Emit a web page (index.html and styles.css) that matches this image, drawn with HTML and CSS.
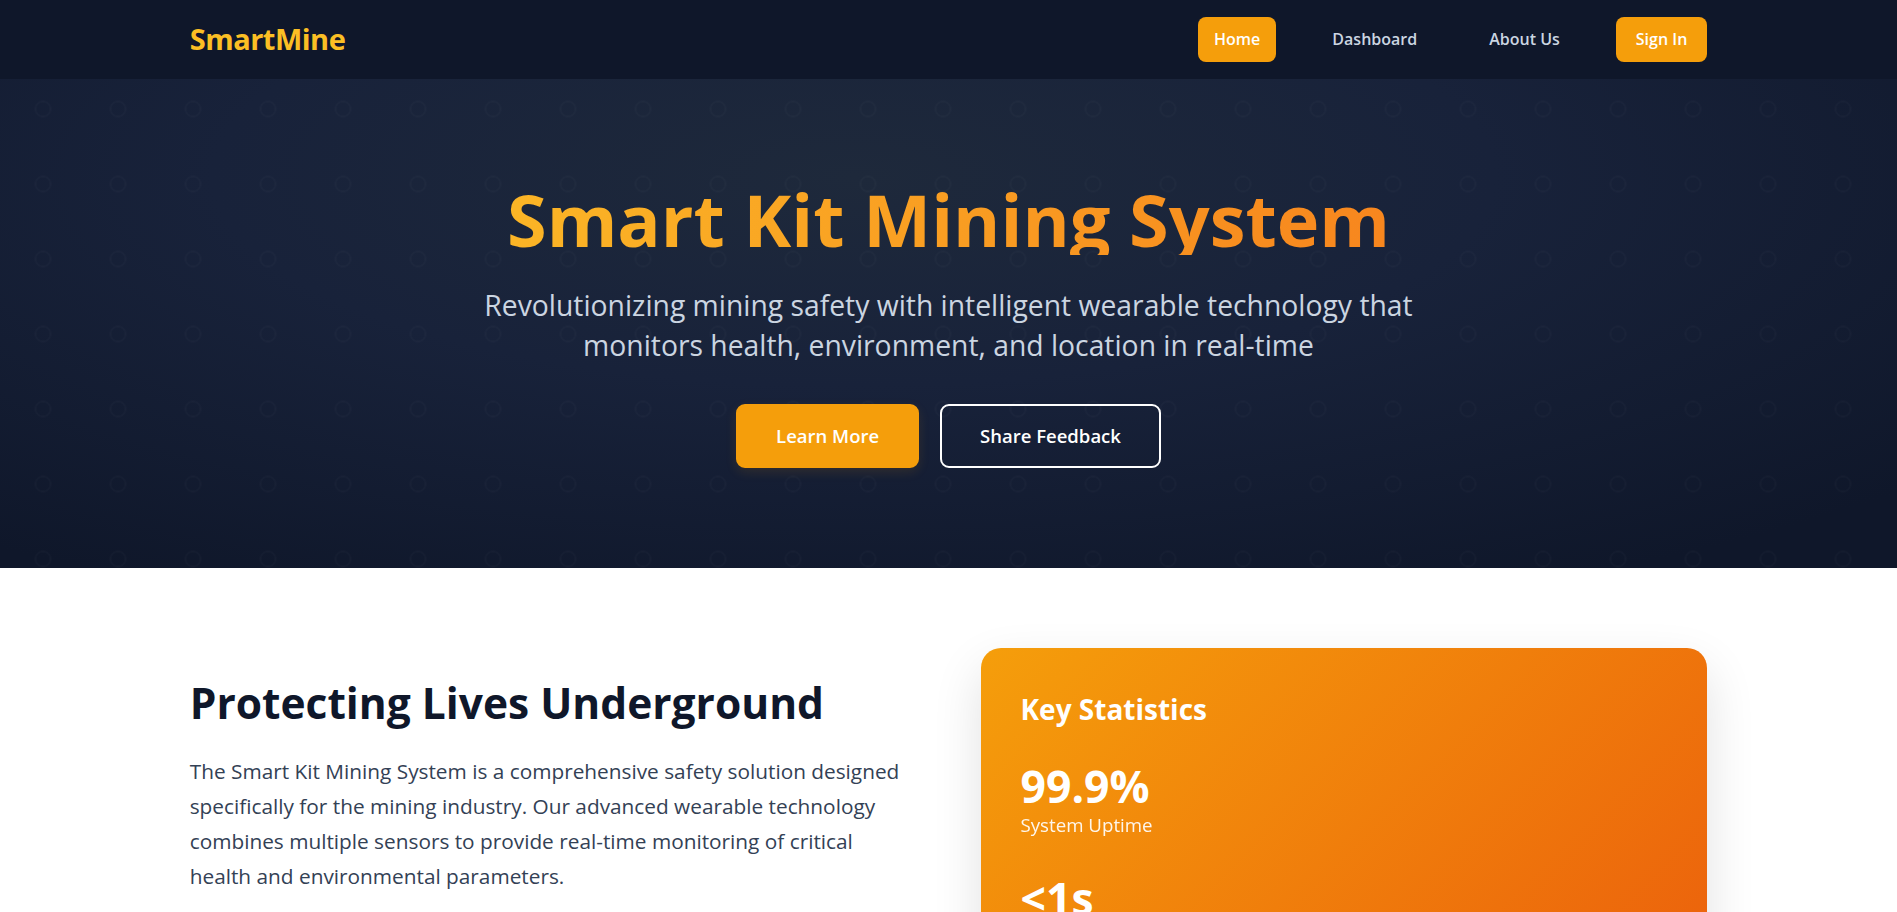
FILE: index.html
```html
<!DOCTYPE html>
<html lang="en">
<head>
<meta charset="UTF-8">
<title>SmartMine - Smart Kit Mining System</title>
<link rel="stylesheet" href="styles.css">
</head>
<body>
<nav class="navbar">
  <div class="container nav-inner">
    <a href="#" class="logo">SmartMine</a>
    <ul class="nav-links">
      <li><a href="#" class="nav-link active">Home</a></li>
      <li><a href="#" class="nav-link">Dashboard</a></li>
      <li><a href="#" class="nav-link">About Us</a></li>
      <li><a href="#" class="nav-link signin">Sign In</a></li>
    </ul>
  </div>
</nav>

<section class="hero">
  <div class="container hero-inner">
    <h1 class="hero-title">Smart Kit Mining System</h1>
    <p class="hero-subtitle">Revolutionizing mining safety with intelligent wearable technology that monitors health, environment, and location in real-time</p>
    <div class="hero-actions">
      <a href="#" class="btn btn-primary">Learn More</a>
      <a href="#" class="btn btn-outline">Share Feedback</a>
    </div>
  </div>
</section>

<section class="about">
  <div class="container about-grid">
    <div class="about-text">
      <h2>Protecting Lives Underground</h2>
      <p>The Smart Kit Mining System is a comprehensive safety solution designed specifically for the mining industry. Our advanced wearable technology combines multiple sensors to provide real-time monitoring of critical health and environmental parameters.</p>
    </div>
    <div class="stats-card">
      <h3>Key Statistics</h3>
      <div class="stat">
        <div class="stat-value">99.9%</div>
        <div class="stat-label">System Uptime</div>
      </div>
      <div class="stat">
        <div class="stat-value">&lt;1s</div>
        <div class="stat-label">Alert Response Time</div>
      </div>
      <div class="stat">
        <div class="stat-value">24/7</div>
        <div class="stat-label">Continuous Monitoring</div>
      </div>
    </div>
  </div>
</section>
</body>
</html>
```

FILE: styles.css
```css
* {
  box-sizing: border-box;
  margin: 0;
  padding: 0;
}

body {
  font-family: "Open Sans", "Noto Sans", sans-serif;
  color: #334155;
  background: #ffffff;
  line-height: 1.6;
}

a {
  text-decoration: none;
}

.container {
  width: 80%;
  margin: 0 auto;
}

/* Navbar */
.navbar {
  background: #0f172a;
  padding: 16px 0 17px;
}

.nav-inner {
  display: flex;
  align-items: center;
  justify-content: space-between;
}

.logo {
  font-size: 29px;
  font-weight: 700;
  color: #fbbf24;
  letter-spacing: -0.5px;
}

.nav-links {
  list-style: none;
  display: flex;
  align-items: center;
  gap: 40px;
}

.nav-link {
  display: block;
  font-size: 16px;
  font-weight: 600;
  color: #cbd5e1;
  padding: 8px 16px;
  line-height: 29px;
  border-radius: 8px;
}

.nav-link.active,
.nav-link.signin {
  background: #f59e0b;
  color: #ffffff;
}

.nav-link.signin {
  padding: 8px 20px;
}

/* Hero */
.hero {
  background-color: #0f172a;
  background-image:
    radial-gradient(circle at 37.5px 37.5px, transparent 6.5px, rgba(255, 255, 255, 0.024) 7px, rgba(255, 255, 255, 0.024) 8px, transparent 8.5px),
    radial-gradient(ellipse 75% 95% at 45% 20%, #1e293b 0%, #18223a 45%, #0f172a 100%);
  background-size: 75px 75px, 100% 100%;
  background-position: 5.5px -7.5px, 0 0;
  padding: 104px 0 100px;
  text-align: center;
}

.hero-title {
  font-size: 72px;
  font-weight: 700;
  line-height: 1;
  background: linear-gradient(90deg, #fbb526 0%, #f7861e 100%);
  -webkit-background-clip: text;
  background-clip: text;
  color: transparent;
  display: inline-block;
  vertical-align: top;
}

.hero-subtitle {
  font-size: 28.3px;
  line-height: 40px;
  color: #cbd5e1;
  max-width: 1000px;
  margin: 30px auto 39px;
}

.hero-actions {
  display: flex;
  justify-content: center;
  gap: 21px;
}

.btn {
  display: inline-block;
  font-size: 18.5px;
  font-weight: 600;
  line-height: 28px;
  padding: 16px 38px;
  border: 2px solid transparent;
  border-radius: 9px;
  color: #ffffff;
}

.btn-primary {
  background: #f59e0b;
  border-color: #f59e0b;
  box-shadow: 0 4px 12px rgba(245, 158, 11, 0.12);
}

.btn-outline {
  background: transparent;
  border-color: #ffffff;
}

/* About */
.about {
  padding: 80px 0;
}

.about-grid {
  display: grid;
  grid-template-columns: 1fr 1fr;
  gap: 64px;
  align-items: start;
}

.about-text {
  padding-top: 29px;
}

.about-text h2 {
  font-size: 42.5px;
  font-weight: 700;
  line-height: 1.2;
  color: #0f172a;
  margin-bottom: 26px;
}

.about-text p {
  font-size: 20.8px;
  line-height: 35px;
  color: #334155;
}

.stats-card {
  background: linear-gradient(135deg, #f59e0b 0%, #ea580c 100%);
  border-radius: 20px;
  padding: 40px;
  color: #ffffff;
  box-shadow: 0 20px 50px rgba(0, 0, 0, 0.12);
}

.stats-card h3 {
  font-size: 28px;
  font-weight: 700;
  line-height: 1.5;
  margin-bottom: 30px;
}

.stat {
  margin-bottom: 34px;
}

.stat-value {
  font-size: 44.5px;
  font-weight: 700;
  line-height: 1.15;
}

.stat-label {
  font-size: 18.7px;
  line-height: 26px;
  opacity: 0.92;
}
```
